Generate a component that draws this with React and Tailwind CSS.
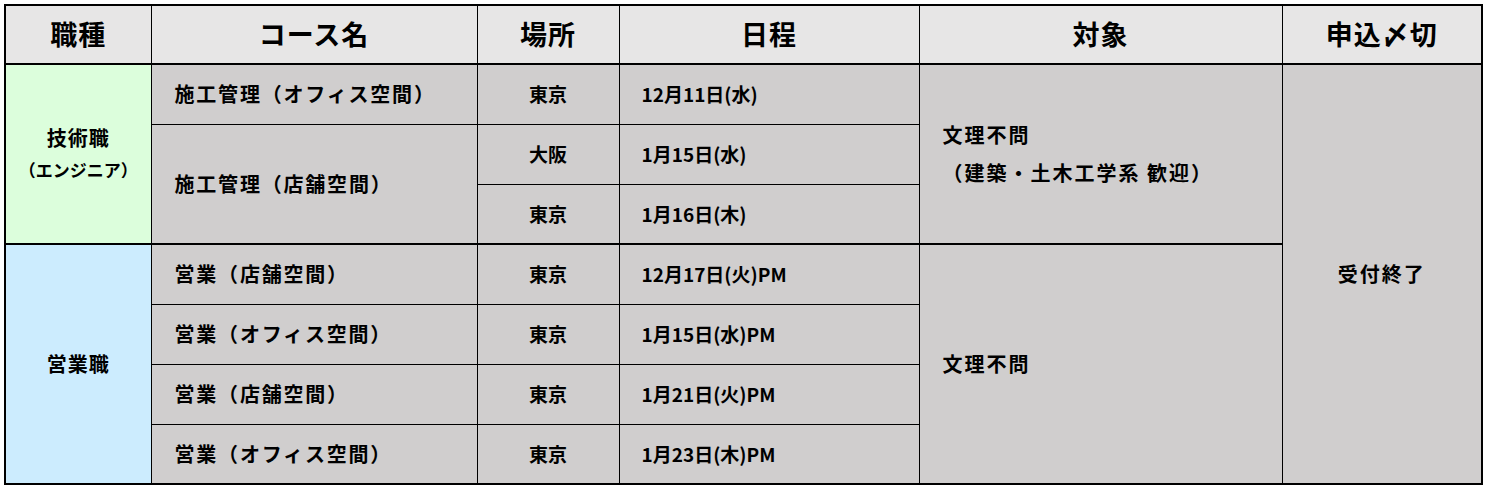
import React from "react"

const rows = [
  { course: "施工管理（オフィス空間）", place: "東京", date: "12月11日(水)" },
  { course: "施工管理（店舗空間）", place: "大阪", date: "1月15日(水)" },
  { course: null, place: "東京", date: "1月16日(木)" },
  { course: "営業（店舗空間）", place: "東京", date: "12月17日(火)PM" },
  { course: "営業（オフィス空間）", place: "東京", date: "1月15日(水)PM" },
  { course: "営業（店舗空間）", place: "東京", date: "1月21日(火)PM" },
  { course: "営業（オフィス空間）", place: "東京", date: "1月23日(木)PM" },
]

const cell = "border border-black bg-[#d0cece] text-[19px] font-bold"

export default function App() {
  return (
    <div className="bg-white p-[4px] font-['Noto_Sans_CJK_JP',sans-serif] text-black">
      <table className="table-fixed border-collapse border-2 border-black w-[1477px]">
        <colgroup>
          <col className="w-[146px]" />
          <col className="w-[326px]" />
          <col className="w-[142px]" />
          <col className="w-[300px]" />
          <col className="w-[363px]" />
          <col className="w-[200px]" />
        </colgroup>
        <thead>
          <tr className="h-[59px] bg-[#e7e6e6] text-[27px] font-bold tracking-[1px]">
            <th className="border border-b-2 border-black">職種</th>
            <th className="border border-b-2 border-black">コース名</th>
            <th className="border border-b-2 border-black">場所</th>
            <th className="border border-b-2 border-black">日程</th>
            <th className="border border-b-2 border-black">対象</th>
            <th className="border border-b-2 border-black">申込〆切</th>
          </tr>
        </thead>
        <tbody>
          {rows.map((r, i) => {
            const groupEnd = i === 2
            const b = groupEnd ? "border-b-2" : ""
            return (
              <tr key={i} className="h-[60px]">
                {i === 0 && (
                  <td rowSpan={3} className="border border-b-2 border-black bg-[#dcfedc] text-center font-bold">
                    <div className="leading-[32px] text-[20px] tracking-[1px]">技術職</div>
                    <div className="leading-[32px] text-[17px]">（エンジニア）</div>
                  </td>
                )}
                {i === 3 && (
                  <td rowSpan={4} className="border border-black bg-[#ccecfe] text-center text-[20px] font-bold tracking-[1px]">
                    営業職
                  </td>
                )}
                {r.course !== null && (
                  <td
                    rowSpan={i === 1 ? 2 : 1}
                    className={`${cell} ${i === 1 ? "border-b-2" : b} pl-[23px] text-[20px] tracking-[1.8px]`}
                  >
                    {r.course}
                  </td>
                )}
                <td className={`${cell} ${b} text-center`}>{r.place}</td>
                <td className={`${cell} ${b} pl-[22px]`}>{r.date}</td>
                {i === 0 && (
                  <td rowSpan={3} className={`${cell} border-b-2 pl-[23px] text-[20px] tracking-[2px]`}>
                    <div className="leading-[38px]">文理不問</div>
                    <div className="leading-[38px]">（建築・土木工学系 歓迎）</div>
                  </td>
                )}
                {i === 3 && (
                  <td rowSpan={4} className={`${cell} pl-[23px] text-[20px] tracking-[2px]`}>
                    文理不問
                  </td>
                )}
                {i === 0 && (
                  <td rowSpan={7} className={`${cell} text-center text-[20px] tracking-[2px]`}>
                    受付終了
                  </td>
                )}
              </tr>
            )
          })}
        </tbody>
      </table>
    </div>
  )
}
